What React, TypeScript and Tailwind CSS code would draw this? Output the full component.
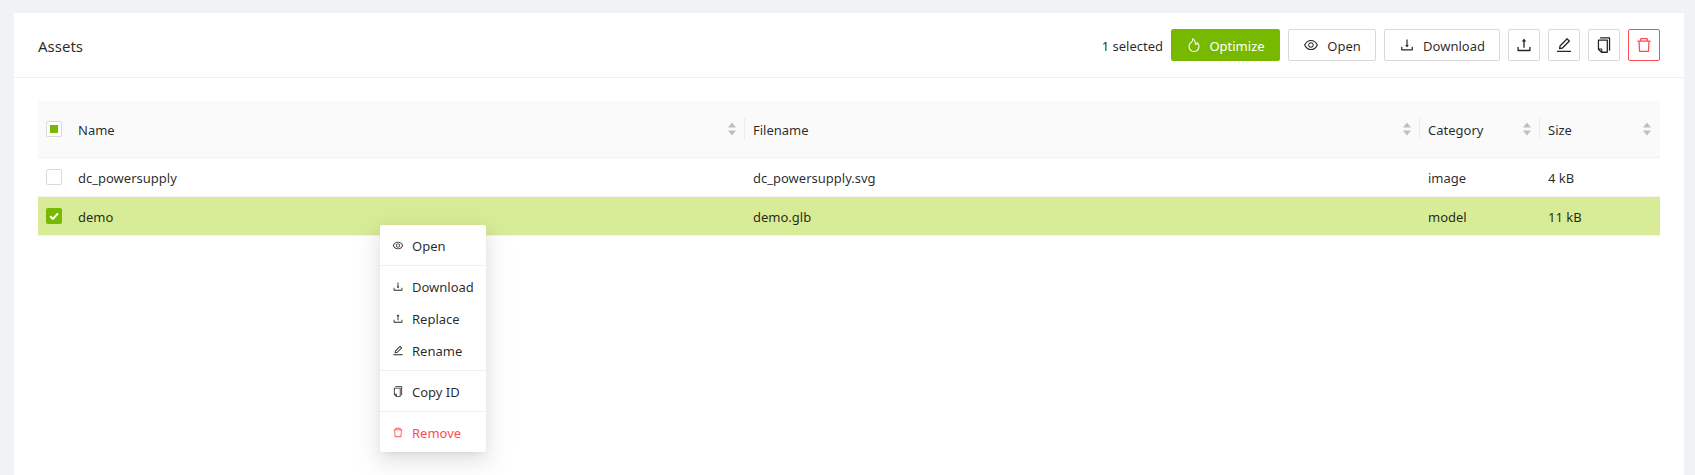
import type { ReactNode } from 'react';
import {
  AiOutlineCopy,
  AiOutlineDelete,
  AiOutlineDownload,
  AiOutlineEdit,
  AiOutlineEye,
  AiOutlineFire,
  AiOutlineUpload,
} from 'react-icons/ai';

const rows = [
  { name: 'dc_powersupply', filename: 'dc_powersupply.svg', category: 'image', size: '4 kB', selected: false },
  { name: 'demo', filename: 'demo.glb', category: 'model', size: '11 kB', selected: true },
];

const COLS = 'grid grid-cols-[32px_675px_675px_120px_120px]';

function SortIcon() {
  return (
    <svg width="10" height="16" viewBox="0 0 10 16" className="shrink-0">
      <path d="M5 1.5 9 6.5H1Z" fill="#bfbfbf" />
      <path d="M5 14.5 9 9.5H1Z" fill="#bfbfbf" />
    </svg>
  );
}

function HeaderCell({ label, first }: { label: string; first?: boolean }) {
  return (
    <div className="relative flex items-center justify-between pl-2 pr-2">
      {!first && <span className="absolute -left-px top-[17px] h-[22px] w-px bg-[#ececec]" />}
      <span className="pt-[3px]">{label}</span>
      <SortIcon />
    </div>
  );
}

function Checkbox({ state }: { state: 'off' | 'on' | 'partial' }) {
  if (state === 'on') {
    return (
      <span className="flex h-4 w-4 items-center justify-center rounded-[2px] bg-[#76b900]">
        <svg width="12" height="12" viewBox="0 0 12 12">
          <path d="M2 6.2 5 8.8 10 3.4" fill="none" stroke="#fff" strokeWidth="2" />
        </svg>
      </span>
    );
  }
  return (
    <span className="flex h-4 w-4 items-center justify-center rounded-[2px] border border-[#d9d9d9] bg-white">
      {state === 'partial' && <span className="h-2 w-2 bg-[#76b900]" />}
    </span>
  );
}

function Button({ children, className }: { children: ReactNode; className: string }) {
  return (
    <button className={`flex h-8 items-center justify-center rounded-[2px] border ${className}`}>{children}</button>
  );
}

function MenuItem({ icon, label, danger }: { icon: ReactNode; label: string; danger?: boolean }) {
  return (
    <div className={`flex h-8 items-center gap-2 px-3 ${danger ? 'text-[#ff4d4f]' : 'text-[#000000d9]'}`}>
      <span className="flex w-3 text-[15px]">{icon}</span>
      <span className="pt-[3px]">{label}</span>
    </div>
  );
}

function Divider() {
  return <div className="my-1 h-px bg-[#f0f0f0]" />;
}

export default function App() {
  return (
    <div
      className="h-[475px] overflow-hidden bg-[#f0f2f5] pl-[14px] pr-[11px] pt-[13px] text-[13px] text-[#000000d9]"
      style={{ fontFamily: '"Noto Sans", sans-serif' }}
    >
      <div className="relative h-[600px] bg-white">
        {/* Card header */}
        <div className="flex h-[65px] items-center justify-between border-b border-[#f0f0f0] pl-6 pr-6">
          <div className="pt-[3px] text-[15px]">Assets</div>
          <div className="flex items-center gap-2">
            <span className="pt-[3px]">1 selected</span>
            <Button className="w-[109px] gap-[7px] border-[#76b900] bg-[#76b900] text-white">
              <AiOutlineFire size={16} />
              <span className="pt-[3px]">Optimize</span>
            </Button>
            <Button className="w-[88px] gap-2 border-[#d9d9d9] bg-white">
              <AiOutlineEye size={16} />
              <span className="pt-[3px]">Open</span>
            </Button>
            <Button className="w-[116px] gap-2 border-[#d9d9d9] bg-white">
              <AiOutlineDownload size={16} />
              <span className="pt-[3px]">Download</span>
            </Button>
            <Button className="w-8 border-[#d9d9d9] bg-white">
              <AiOutlineUpload size={18} />
            </Button>
            <Button className="w-8 border-[#d9d9d9] bg-white">
              <AiOutlineEdit size={18} />
            </Button>
            <Button className="w-8 border-[#d9d9d9] bg-white">
              <AiOutlineCopy size={18} />
            </Button>
            <Button className="w-8 border-[#ff4d4f] bg-white text-[#ff4d4f]">
              <AiOutlineDelete size={18} />
            </Button>
          </div>
        </div>

        {/* Table */}
        <div className="px-6 pt-[23px]">
          <div className={`${COLS} h-[57px] border-b border-[#f0f0f0] bg-[#fafafa]`}>
            <div className="flex items-center pl-2">
              <Checkbox state="partial" />
            </div>
            <HeaderCell label="Name" first />
            <HeaderCell label="Filename" />
            <HeaderCell label="Category" />
            <HeaderCell label="Size" />
          </div>
          {rows.map((row) => (
            <div
              key={row.name}
              className={`${COLS} h-[39px] border-b border-[#f0f0f0] ${row.selected ? 'bg-[#d8eb96]' : 'bg-white'}`}
            >
              <div className="flex items-center pl-2">
                <Checkbox state={row.selected ? 'on' : 'off'} />
              </div>
              <div className="flex items-center pl-2 pt-[3px]">{row.name}</div>
              <div className="flex items-center pl-2 pt-[3px]">{row.filename}</div>
              <div className="flex items-center pl-2 pt-[3px]">{row.category}</div>
              <div className="flex items-center pl-2 pt-[3px]">{row.size}</div>
            </div>
          ))}
        </div>

        {/* Context menu */}
        <div className="absolute left-[366px] top-[212px] w-[106px] rounded-[2px] bg-white py-1 shadow-[0_3px_6px_-4px_rgba(0,0,0,0.12),0_6px_16px_0_rgba(0,0,0,0.08),0_9px_28px_8px_rgba(0,0,0,0.05)]">
          <MenuItem icon={<AiOutlineEye />} label="Open" />
          <Divider />
          <MenuItem icon={<AiOutlineDownload />} label="Download" />
          <MenuItem icon={<AiOutlineUpload />} label="Replace" />
          <MenuItem icon={<AiOutlineEdit />} label="Rename" />
          <Divider />
          <MenuItem icon={<AiOutlineCopy />} label="Copy ID" />
          <Divider />
          <MenuItem icon={<AiOutlineDelete />} label="Remove" danger />
        </div>
      </div>
    </div>
  );
}
